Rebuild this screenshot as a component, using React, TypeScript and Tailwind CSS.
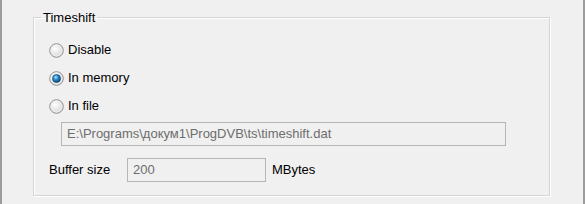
import React from 'react';

function Radio({ checked }: { checked?: boolean }) {
  return (
    <svg width="15" height="15" viewBox="0 0 15 15" className="shrink-0">
      <defs>
        <radialGradient id="rbg" cx="40%" cy="35%" r="70%">
          <stop offset="0%" stopColor="#ffffff" />
          <stop offset="100%" stopColor="#d4d4d4" />
        </radialGradient>
        <radialGradient id="dot" cx="40%" cy="35%" r="65%">
          <stop offset="0%" stopColor="#a8e8ff" />
          <stop offset="45%" stopColor="#2a8fd0" />
          <stop offset="100%" stopColor="#0b3f6e" />
        </radialGradient>
      </defs>
      <circle cx="7.5" cy="7.5" r="6.8" fill="url(#rbg)" stroke="#8e8f8f" strokeWidth="1" />
      <circle cx="7.5" cy="7.5" r="5.5" fill="none" stroke="#f4f4f4" strokeWidth="0.8" />
      {checked && <circle cx="7.5" cy="7.5" r="4" fill="url(#dot)" stroke="#1c4f78" strokeWidth="0.7" />}
    </svg>
  );
}

function Option({ label, checked }: { label: string; checked?: boolean }) {
  return (
    <label className="flex items-center gap-[4px] h-4">
      <Radio checked={checked} />
      <span>{label}</span>
    </label>
  );
}

export default function App() {
  return (
    <div
      className="w-[585px] h-[204px] bg-[#f0f0f0] border-l-2 border-r-2 border-[#9c9c9c] text-[13px] text-black overflow-hidden"
      style={{ fontFamily: '"Liberation Sans", Arial, sans-serif' }}
    >
      <fieldset className="ml-[31px] mt-[10px] w-[517px] h-[186px] border border-[#d5d5d5] shadow-[inset_1px_1px_0_#fff,1px_1px_0_#fff] p-0 m-0">
        <legend className="ml-[7px] px-[2px] leading-[15px]">Timeshift</legend>

        <div className="flex flex-col gap-3 pl-[15px] pt-[17px]">
          <Option label="Disable" />
          <Option label="In memory" checked />
          <Option label="In file" />
        </div>

        <div className="pl-[27px] mt-2">
          <div className="w-[445px] h-6 border border-[#b5b5b5] bg-[#f0f0f0] text-[#6d6d6d] px-[5px] flex items-center">
            E:\Programs\докум1\ProgDVB\ts\timeshift.dat
          </div>
        </div>

        <div className="flex items-center pl-[15px] mt-3">
          <span className="w-[78px]">Buffer size</span>
          <div className="w-[139px] h-6 border border-[#b5b5b5] bg-[#f0f0f0] text-[#6d6d6d] px-[5px] flex items-center">
            200
          </div>
          <span className="ml-[6px]">MBytes</span>
        </div>
      </fieldset>
    </div>
  );
}
